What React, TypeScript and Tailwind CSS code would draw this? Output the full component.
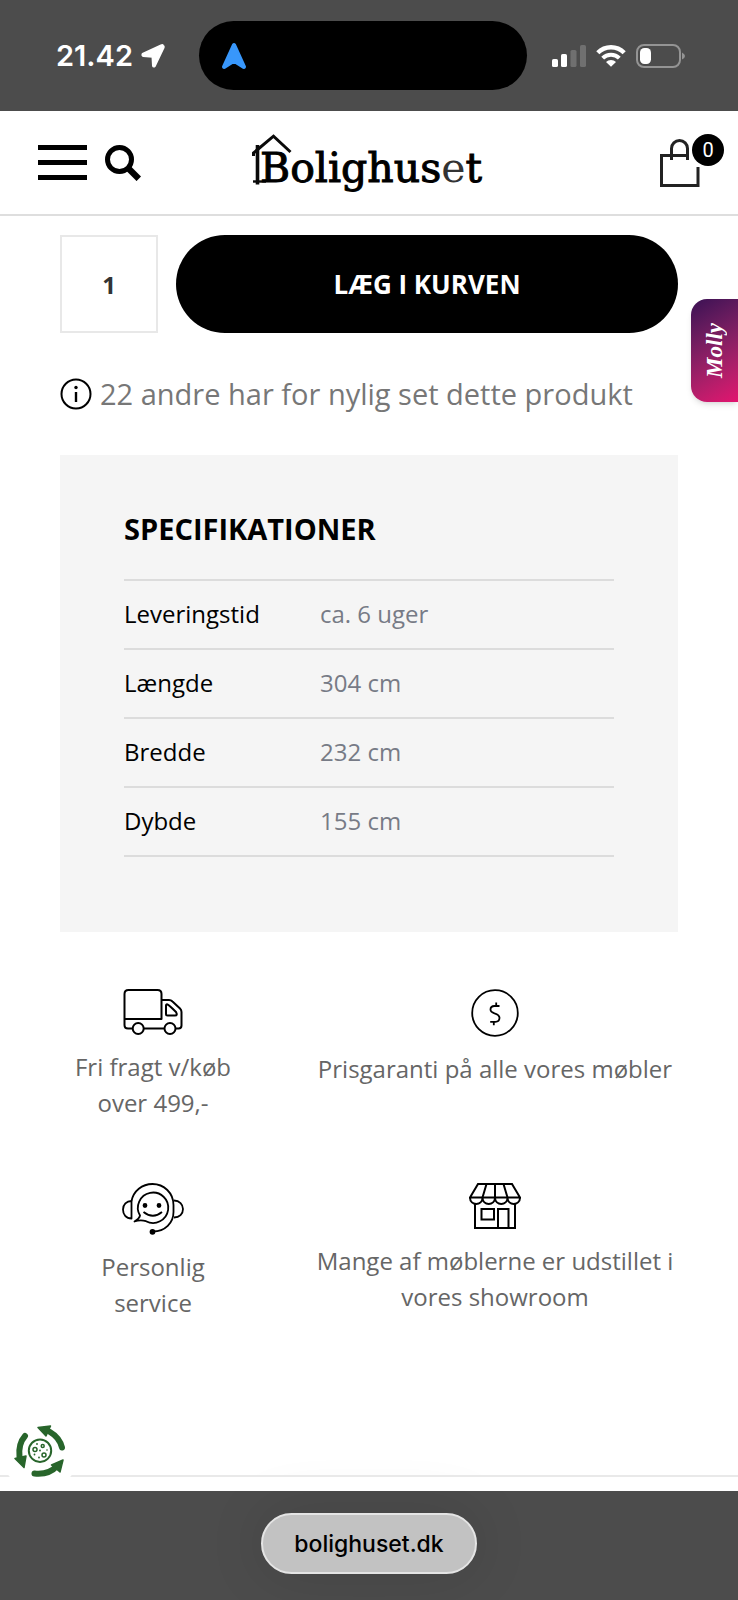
import type { ReactNode } from 'react';

const specs = [
  { name: 'Leveringstid', value: 'ca. 6 uger' },
  { name: 'Længde', value: '304 cm' },
  { name: 'Bredde', value: '232 cm' },
  { name: 'Dybde', value: '155 cm' },
];

function LocationArrow() {
  return (
    <svg width="24" height="24" viewBox="0 0 24 24" fill="#fff" stroke="#fff" strokeWidth="2" strokeLinejoin="round" aria-hidden="true">
      <path d="M22 1.500Q21.500 .8 20 1.400L1.600 10Q1 11.600 2.200 12L11.500 12.800 12 21.800Q12.600 23.200 13.800 22L22.600 3.600Q23 2.200 22 1.500Z" />
    </svg>
  );
}

function NavigationMark() {
  return (
    <svg width="24" height="26" viewBox="0 0 24 26" fill="#3897fb" stroke="#3897fb" strokeWidth="2" strokeLinejoin="round" aria-hidden="true">
      <path d="M11 1.6Q12 .4 13 1.6L23 23.6Q23 25.4 21.4 24.8L12 19 2.6 24.8Q1 25.4 1 23.6Z" />
    </svg>
  );
}

function SignalIcon() {
  return (
    <svg width="34" height="22" viewBox="0 0 34 22" fill="#fff" aria-hidden="true">
      <rect x="0" y="14" width="6" height="8" rx="1.6" />
      <rect x="9" y="9" width="6" height="13" rx="1.6" />
      <rect x="18.500" y="5" width="6" height="17" rx="1.6" fill="#707070" />
      <rect x="28" y="0" width="6" height="22" rx="1.6" fill="#707070" />
    </svg>
  );
}

function WifiIcon() {
  return (
    <svg width="30" height="22" viewBox="0 0 30 22" fill="none" stroke="#fff" strokeWidth="4.400" aria-hidden="true">
      <path d="M1.800 7.800a18.600 18.600 0 0 1 26.400 0" />
      <path d="M6.700 13.200a11.700 11.700 0 0 1 16.600 0" strokeWidth="4" />
      <path d="M15 21.800 10 17a7 7 0 0 1 10 0Z" fill="#fff" stroke="none" />
    </svg>
  );
}

function BatteryIcon() {
  return (
    <svg width="49" height="24" viewBox="0 0 49 24" aria-hidden="true">
      <rect x="1" y="1" width="43" height="22" rx="7" fill="none" stroke="#949494" strokeWidth="2" />
      <rect x="4" y="4" width="11" height="16" rx="4.500" fill="#fff" />
      <path d="M46 8.500q3 1.500 3 3.500t-3 3.500Z" fill="#949494" />
    </svg>
  );
}

function StatusBar() {
  return (
    <div className="grid h-[111px] grid-cols-[199px_1fr_211px] items-center bg-[#4c4c4c]">
      <div className="flex items-center gap-2 pl-14">
        <span className="font-['Inter',sans-serif] text-[29px] leading-9 font-semibold text-white">21.42</span>
        <LocationArrow />
      </div>
      <div className="flex h-[69px] items-center rounded-full bg-black pl-[23px]">
        <NavigationMark />
      </div>
      <div className="flex items-center gap-2.5 pl-[25px]">
        <SignalIcon />
        <WifiIcon />
        <BatteryIcon />
      </div>
    </div>
  );
}

function Logo() {
  return (
    <a href="#" className="relative block pt-2.5 pl-1 font-['DejaVu_Serif',serif] text-[41px] leading-[48px] text-black">
      <svg className="absolute top-0 -left-1" width="42" height="52" viewBox="0 0 42 52" fill="none" stroke="#0a0a0a" strokeWidth="3" aria-hidden="true">
        <path d="M1.500 22V19L21.500 2.200 38.500 18" />
        <path d="M5.500 11V50.500" strokeWidth="3.600" />
        <path d="M1 47.500H14" strokeWidth="2.400" />
      </svg>
      <span className="relative [-webkit-text-stroke:1px]">Bolighus</span>
      <span className="text-[#333]">e</span>
      <span className="[-webkit-text-stroke:1px]">t</span>
    </a>
  );
}

function SiteHeader() {
  return (
    <header className="grid h-[105px] grid-cols-[1fr_auto_1fr] items-center border-b-2 border-[#dedede] bg-white px-3.5">
      <div className="flex items-center gap-[18px] pl-6">
        <button type="button" aria-label="Menu" className="flex flex-col gap-2.5">
          <span className="block h-[5px] w-[49px] bg-black" />
          <span className="block h-[5px] w-[49px] bg-black" />
          <span className="block h-[5px] w-[49px] bg-black" />
        </button>
        <button type="button" aria-label="Søg">
          <svg width="36" height="36" viewBox="0 0 36 36" fill="none" stroke="#000" aria-hidden="true">
            <circle cx="14.500" cy="14.500" r="12" strokeWidth="5" />
            <path d="M22.500 22.500 33.800 33.800" strokeWidth="6.400" />
          </svg>
        </button>
      </div>
      <Logo />
      <button type="button" aria-label="Indkøbskurv" className="relative mb-1 justify-self-end">
        <svg width="66" height="54" viewBox="0 0 66 54" fill="none" stroke="#222" strokeWidth="3" aria-hidden="true">
          <path d="M40 33V51.500H3.500V21.500H31" />
          <path d="M13.500 26V14.500a8 8 0 0 1 16 0V26" />
        </svg>
        <span className="absolute top-0 right-0 flex size-8 items-center justify-center rounded-full bg-black font-['Roboto',sans-serif] text-[20px] leading-8 text-white">0</span>
      </button>
    </header>
  );
}

function TruckIcon() {
  return (
    <svg width="60" height="46" viewBox="0 0 60 46" fill="none" stroke="#000" strokeWidth="2" strokeLinejoin="round" aria-hidden="true">
      <path d="M9.500 39.500H5Q1.500 39.500 1.500 36V5Q1.500 1 5.500 1H34.500Q38.500 1 38.500 5V30H1.500" />
      <path d="M38.500 11H46Q48 11 49.500 12.500L57 19.500Q58.500 21 58.500 23V36.500Q58.500 39.500 55.500 39.500H53M21 39.500H41" />
      <path d="M43 16.500Q43 15 44.500 15.500 46 16 53 23Q55 26.500 52 26.500H44.500Q43 26.500 43 25Z" />
      <circle cx="15.200" cy="39.500" r="5.500" />
      <circle cx="47" cy="39.500" r="5.500" />
    </svg>
  );
}

function DollarIcon() {
  return (
    <svg width="48" height="48" viewBox="0 0 48 48" fill="none" stroke="#000" strokeWidth="1.800" aria-hidden="true">
      <circle cx="24" cy="24" r="22.800" />
      <path d="M28.500 17H23.500Q19.500 17.200 19.500 20.500 19.500 23 23.500 24.300 28.500 25.800 28.500 29 28.300 32.800 24.500 32.800H19.200M25.200 17V13.500M22.800 33V36.300" />
    </svg>
  );
}

function ServiceIcon() {
  return (
    <svg width="62" height="52" viewBox="0 0 62 52" fill="none" stroke="#000" strokeWidth="1.800" strokeLinejoin="round" aria-hidden="true">
      <path d="M9.500 18C11.500 8 20 1 30.500 1 42 1 51.500 10 51.500 22V29C51.500 40 43 48.500 31 48.500" />
      <path d="M9.500 18C4.500 18 1 21.500 1 26.500 1 31.500 4 35.500 9.500 35.500Z" />
      <path d="M52 17.500C57.500 17.500 61 21.500 61 26 61 31 57.500 34.500 52 34.500" />
      <path d="M18 32.500A15.200 15.200 0 1 1 24 38.200Q18.500 36.500 12.500 38.500 17.500 35.500 18 32.500Z" />
      <path d="M21.500 29Q31 36.500 40 29" />
      <circle cx="23" cy="22.500" r="1.500" fill="#000" />
      <circle cx="37" cy="22.500" r="1.500" fill="#000" />
      <circle cx="30.500" cy="48.800" r="2" fill="#000" />
    </svg>
  );
}

function StoreIcon() {
  return (
    <svg width="52" height="46" viewBox="0 0 52 46" fill="none" stroke="#000" strokeWidth="2" aria-hidden="true">
      <path d="M9 1H43L51 14.500H1Z" />
      <path d="M17.500 1 13.500 14.500M26 1V14.500M34.500 1 38.500 14.500" />
      <path d="M1 14.500C1 23 13.500 23 13.500 14.500 13.500 23 26 23 26 14.500 26 23 38.500 23 38.500 14.500 38.500 23 51 23 51 14.500" />
      <path d="M6 21V45H46V21" />
      <path d="M12.500 26H25V36.500H12.500ZM29 45V26H39.500V45" />
    </svg>
  );
}

function RecycleCookieIcon() {
  return (
    <svg width="52" height="52" viewBox="0 0 52 52" fill="none" stroke="#28652b" strokeLinecap="round" strokeLinejoin="round" aria-hidden="true">
      <g strokeWidth="6">
        <path d="M48 22.500Q45.500 12.500 36 7" />
        <path d="M11 11Q4 19 5.500 32" />
        <path d="M20.500 48.500Q35 50 43 41" />
      </g>
      <g fill="#28652b" strokeWidth="1.500">
        <path d="M24 2.500 36.500 1 32 11Z" />
        <path d="M1 33.500 12 31 10 42.500Z" />
        <path d="M49 35 37.500 40 46 47Z" />
      </g>
      <circle cx="26" cy="25.700" r="11.200" strokeWidth="2" />
      <g strokeWidth="1.500">
        <circle cx="21" cy="24.500" r="2" />
        <circle cx="28.700" cy="21" r="1.500" />
        <circle cx="30" cy="30" r="2" />
      </g>
      <g fill="#28652b" stroke="none">
        <circle cx="23" cy="19" r=".9" />
        <circle cx="33" cy="25" r=".8" />
        <circle cx="26" cy="25.500" r=".9" />
        <circle cx="20.500" cy="29.500" r=".9" />
        <circle cx="25" cy="32.500" r=".9" />
      </g>
    </svg>
  );
}

function Benefit({ icon, children }: { icon: ReactNode; children: ReactNode }) {
  return (
    <li className="flex flex-col items-center gap-3.5">
      {icon}
      <p className="text-center text-2xl leading-9 text-[#666]">{children}</p>
    </li>
  );
}

export default function App() {
  return (
    <div className="flex min-h-screen flex-col bg-white font-['Open_Sans',sans-serif]">
      <StatusBar />
      <SiteHeader />
      <main className="relative flex-1 border-b-[14px] border-white">
        <div className="px-[60px] pt-[19px]">
          <form className="flex gap-[18px]" onSubmit={(event) => event.preventDefault()}>
            <input
              aria-label="Antal"
              defaultValue="1"
              inputMode="numeric"
              className="size-[98px] border-2 border-[#e8e8e8] bg-white text-center text-2xl font-bold text-[#333]"
            />
            <button type="submit" className="h-[98px] flex-1 rounded-full bg-black text-[26px] leading-9 font-bold text-white">
              LÆG I KURVEN
            </button>
          </form>

          <p className="mt-[41px] flex items-center gap-2 text-[29px] leading-10 whitespace-nowrap text-[#777]">
            <svg className="shrink-0" width="32" height="32" viewBox="0 0 32 32" fill="none" stroke="#000" strokeWidth="2" aria-hidden="true">
              <circle cx="16" cy="16" r="14.500" />
              <path d="M16 14V24" strokeWidth="2.400" />
              <circle cx="16" cy="9.500" r="1.700" fill="#000" stroke="none" />
            </svg>
            22 andre har for nylig set dette produkt
          </p>

          <section className="mt-[41px] bg-[#f5f5f5] px-16 pt-[54px] pb-[75px]">
            <h2 className="text-[29px] leading-10 font-bold text-black">SPECIFIKATIONER</h2>
            <table className="mt-[30px] w-full table-fixed border-collapse border-t-2 border-[#dcdcdc] text-2xl leading-9">
              <tbody>
                {specs.map((spec) => (
                  <tr key={spec.name} className="h-[69px] border-b-2 border-[#dcdcdc]">
                    <th scope="row" className="w-2/5 pb-0.5 text-left font-normal text-black">{spec.name}</th>
                    <td className="pb-0.5 text-[#777b86]">{spec.value}</td>
                  </tr>
                ))}
              </tbody>
            </table>
          </section>

          <ul className="mt-[57px] grid grid-cols-[31fr_61fr] gap-x-[66px] gap-y-[62px]">
            <Benefit icon={<TruckIcon />}>Fri fragt v/køb<br />over 499,-</Benefit>
            <Benefit icon={<DollarIcon />}>Prisgaranti på alle vores møbler</Benefit>
            <Benefit icon={<ServiceIcon />}>Personlig<br />service</Benefit>
            <Benefit icon={<StoreIcon />}>Mange af møblerne er udstillet i vores showroom</Benefit>
          </ul>
        </div>

        <button
          type="button"
          className="absolute top-[83px] right-0 flex h-[103px] w-[47px] items-center justify-center rounded-l-2xl bg-linear-150 from-[#3b1054] to-[#e3126f] shadow-md"
        >
          <span className="rotate-180 font-['Liberation_Serif',serif] text-[23px] leading-7 font-bold text-white italic [writing-mode:vertical-rl]">Molly</span>
        </button>

        <hr className="absolute inset-x-0 bottom-0 border-t-2 border-[#e9e9e9]" />
        <button type="button" aria-label="Cookieindstillinger" className="absolute -bottom-3.5 left-0 flex size-20 items-center justify-center rounded-full bg-white">
          <RecycleCookieIcon />
        </button>
      </main>
      <footer className="flex h-[109px] justify-center bg-[#4c4c4c] pt-[22px]">
        <a href="#" className="flex h-[61px] items-center rounded-full border-2 border-[#e4e4e4] bg-[#c2c2c2] px-[31px] font-['Inter',sans-serif] text-[23px] leading-7 font-medium text-black shadow-[0_0_60px_rgba(0,0,0,0.12)]">
          bolighuset.dk
        </a>
      </footer>
    </div>
  );
}
